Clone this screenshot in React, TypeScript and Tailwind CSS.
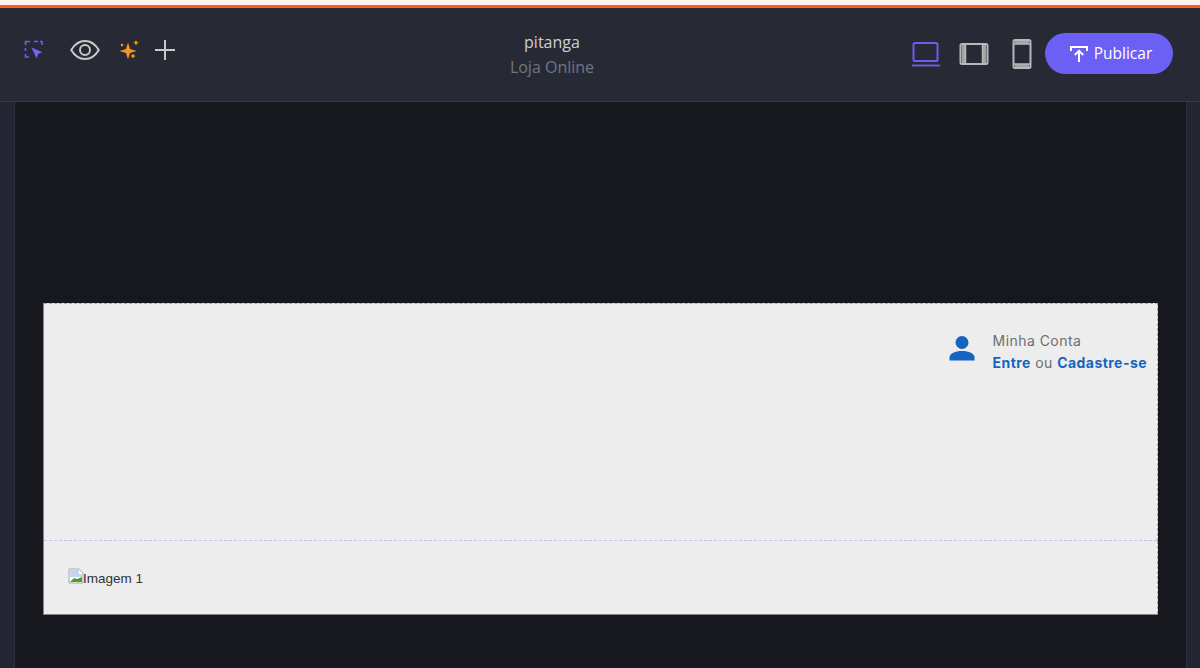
function SelectIcon() {
  return (
    <svg width="20" height="20" viewBox="0 0 20 20" fill="none">
      <path d="M7 1.500H2.500V5M2.500 8v3M2.500 14v3H6M11 1.500h4M17 1.500h2V5" stroke="#6c5ff0" strokeWidth="1.600" />
      <path d="M8.500 7.500l11 4.700-4.200 1.500-1.800 4.500z" fill="#7264f7" />
    </svg>
  );
}

function EyeIcon() {
  return (
    <svg width="30" height="20" viewBox="0 0 30 20" fill="none" stroke="#c9c9c9" strokeWidth="2">
      <path d="M1.200 10C4.500 4.500 9.500 1 15 1s10.500 3.500 13.800 9C25.500 15.500 20.500 19 15 19S4.500 15.500 1.200 10z" />
      <circle cx="15" cy="10" r="5" />
    </svg>
  );
}

function PlusIcon() {
  return (
    <svg width="20" height="20" viewBox="0 0 20 20" fill="none" stroke="#c8c8c8" strokeWidth="2">
      <path d="M10 0v20M0 10h20" />
    </svg>
  );
}

function SparkIcon() {
  return (
    <svg width="20" height="20" viewBox="0 0 20 20" fill="#f7931e">
      <path d="M9 2.500l2 6.500 6.500 2-6.500 2-2 6.500-2-6.500-6.500-2 6.500-2z" />
      <path d="M17 0l1 2 2 .8-2 .8-1 2-1-2-2-.8 2-.8z" />
      <circle cx="3" cy="5" r="1.300" />
      <circle cx="14" cy="16" r="1.800" />
    </svg>
  );
}

function LaptopIcon() {
  return (
    <svg width="30" height="26" viewBox="0 0 30 26" fill="none" stroke="#6c5ff0">
      <rect x="2.500" y="2" width="24" height="18" rx="1.500" strokeWidth="2" />
      <path d="M1 24.500h28" strokeWidth="1.800" />
    </svg>
  );
}

function TabletIcon() {
  return (
    <svg width="30" height="24" viewBox="0 0 30 24" fill="none" stroke="#b8b8b8">
      <rect x="1.500" y="2" width="27" height="20" rx="1.500" strokeWidth="2" />
      <path d="M3 3h3v18H3zM24 3h3v18h-3z" fill="#a2a3a8" stroke="none" />
      <path d="M6.500 3v18M23.500 3v18" strokeWidth="1.500" />
    </svg>
  );
}

function PhoneIcon() {
  return (
    <svg width="20" height="30" viewBox="0 0 20 30" fill="none" stroke="#b8b8b8">
      <rect x="1.500" y="1" width="17" height="28" rx="1.500" strokeWidth="2" />
      <path d="M3 2h14v3H3zM3 25h14v3H3z" fill="#a2a3a8" stroke="none" />
      <path d="M2 5h16M2 25h16" strokeWidth="1.500" />
    </svg>
  );
}

function UploadIcon() {
  return (
    <svg width="18" height="18" viewBox="0 0 18 18" fill="none" stroke="#fff" strokeWidth="2">
      <path d="M1 6V2h16v4M9 17V6M4.800 10L9 5.800 13.200 10" />
    </svg>
  );
}

function UserIcon() {
  return (
    <svg width="26" height="26" viewBox="0 0 26 26" fill="#1565c0">
      <circle cx="13" cy="7.500" r="6.500" />
      <path d="M0.500 25.500v-3c0-4 5.500-6.500 12.500-6.500s12.500 2.500 12.500 6.500v3z" />
    </svg>
  );
}

function BrokenImage() {
  return (
    <svg width="16" height="16" viewBox="0 0 16 16" className="shrink-0 -translate-y-[3px]">
      <path d="M1 1h10l4 4v10H1z" fill="#fff" stroke="#a8a8a8" />
      <path d="M2 2h9v4h3v3H2z" fill="#c5d6f2" />
      <path d="M2 14l4-4 3 1 5-2v5z" fill="#4f9a34" />
    </svg>
  );
}

export default function App() {
  return (
    <div className="h-[668px] w-[1200px] overflow-hidden flex flex-col bg-[#16181d] font-['Open_Sans','Liberation_Sans',sans-serif]">
      <div className="h-[5px] bg-[#fdf3ef]" />
      <div className="h-[3px] bg-[#ff5a1f]" />

      <header className="h-[94px] shrink-0 flex items-start justify-between bg-[#272a35] border-b border-[#373a47] pl-[23px] pr-[27px]">
        <div className="w-[228px] flex items-center pt-[32px]">
          <SelectIcon />
          <span className="ml-[27px]"><EyeIcon /></span>
          <span className="ml-[19px]"><SparkIcon /></span>
          <span className="ml-[16px]"><PlusIcon /></span>
        </div>

        <div className="flex flex-col items-center pt-[22px] text-[16px] leading-[25px]">
          <span className="text-[#cfcfcf]">pitanga</span>
          <span className="text-[#727480]">Loja Online</span>
        </div>

        <div className="w-[320px] flex items-center justify-end pt-[25px]">
          <LaptopIcon />
          <span className="ml-[18px]"><TabletIcon /></span>
          <span className="ml-[23px]"><PhoneIcon /></span>
          <button className="ml-[13px] flex h-[41px] w-[128px] items-center justify-center gap-[6px] rounded-full bg-[#6c5ff5] pl-[4px] text-[15.500px] text-white">
            <UploadIcon />
            Publicar
          </button>
        </div>
      </header>

      <div className="flex-1 flex">
        <aside className="w-[15px] bg-[#232632] border-r border-[#2c2f3d]" />
        <main className="flex-1 px-[28px] pt-[201px]">
          <section className="h-[312px] flex flex-col bg-[#ededed] border-l border-b border-[#85858a]">
            <div className="h-[238px] flex justify-end border-t border-r border-dashed border-t-[#a9a6c9] border-r-[#a9a6c9]">
              <div className="flex-1 flex justify-end border-b border-dashed border-[#c5c0f2] pt-[26px] pr-[10px]">
                <div className="pt-[5px]"><UserIcon /></div>
                <div className="ml-[18px] font-['Inter','Liberation_Sans',sans-serif] text-[14px] tracking-[0.45px] leading-[22px] text-[#6e6e6e]">
                  <div>Minha Conta</div>
                  <div>
                    <span className="font-bold text-[#1565c0]">Entre</span> ou{" "}
                    <span className="font-bold text-[#1565c0]">Cadastre-se</span>
                  </div>
                </div>
              </div>
            </div>
            <div className="flex-1 flex items-center pl-[24px] pt-[3px] text-[13.500px] leading-[18px] text-[#333] font-['Liberation_Sans',sans-serif] border-r border-dashed border-r-[#a9a6c9]">
              <BrokenImage />
              <span className="-ml-px">Imagem 1</span>
            </div>
          </section>
        </main>
        <aside className="w-[14px] bg-[#232632] border-l border-[#2c2f3d]" />
      </div>
    </div>
  );
}
